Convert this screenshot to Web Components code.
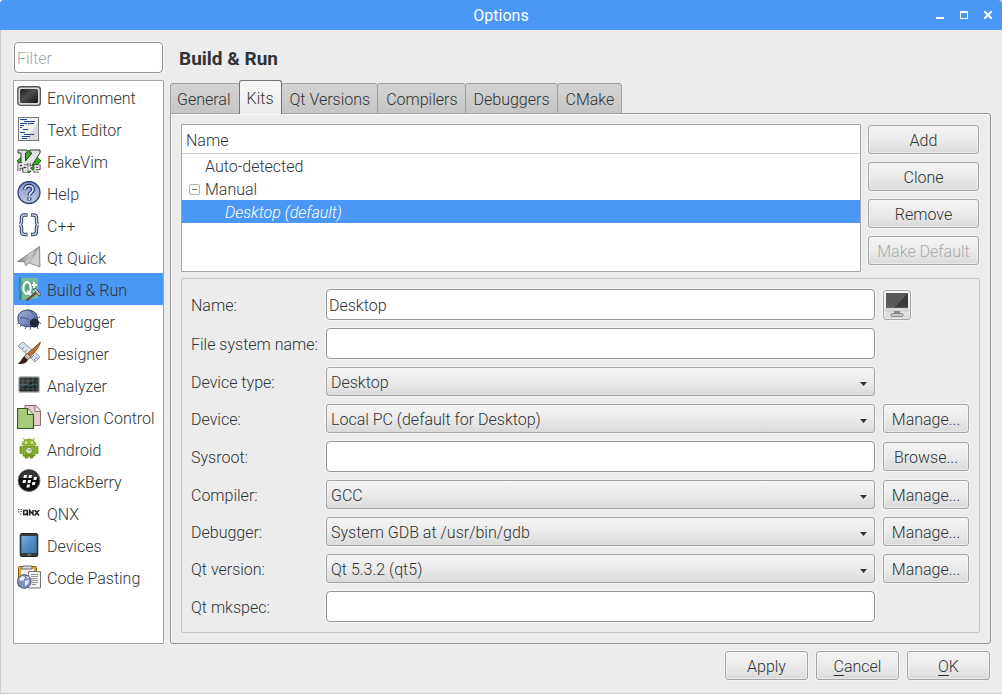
<!DOCTYPE html>
<html lang="en">
<head>
<meta charset="utf-8">
<title>Options</title>
<style>
html { --accent: #4b97f5; --face: #ececec; --ink: #2f3436; --edge: #a3a5a6; --edge-dark: #929495; }
body { margin: 0; background: #ececec; color: #2f3436; font: 300 16px/20px Roboto, sans-serif; }
</style>
</head>
<body>
<options-window></options-window>

<script>
const define = (name, html, setup) => {
  const template = document.createElement('template');
  template.innerHTML = html;
  customElements.define(name, class extends HTMLElement {
    connectedCallback() {
      if (this.shadowRoot) return;
      const content = template.content.cloneNode(true);
      if (setup) setup(this, content);
      this.attachShadow({ mode: 'open' }).append(content);
    }
  });
};

const ICONS = {
  environment: `<defs><linearGradient id="a" x1="0" y1="0" x2="1" y2="1"><stop offset="0" stop-color="#1d1d1d"/><stop offset=".45" stop-color="#4c4e4e"/><stop offset="1" stop-color="#111"/></linearGradient></defs><rect x=".8" y="1.8" width="22.6" height="18.6" rx="3" fill="#d9d9d9" stroke="#55575a" stroke-width="1.4"/><rect x="3" y="4" width="18" height="14" rx="1.5" fill="url(#a)"/>`,
  text: `<rect x="1.500" y=".5" width="20" height="23" fill="#f1f1f2" stroke="#77797b"/><path d="M21 5V23H9z" fill="#dadbdc"/><path d="M3 2.500h7M7 4.500h11M3 6.500h7M3 8.500h4M11 6.500h6M3 10.500h2M6 12.500h5M3 15.500h5M7 17.500h10M5 19.500h8M5 21.500h5" stroke="#20458c" stroke-width="1.200"/>`,
  vim: `<path d="M12 1l12 11-12 12L0 12z" fill="#36b21e" stroke="#176b0c"/><path d="M1 1h9v3H8.500v8L15 4h-2V1h10v3L12 21H6L4 18V4H1z" fill="#e2e4e3" stroke="#333" stroke-width="1"/><path d="M2 22v-7h3M2 18h3M7 17h3v5H7v-2h3M12 14v8M15 17l-3 2 3 3M18 19.500h4V17h-4v5h4" fill="none" stroke="#333" stroke-width="3"/><path d="M2 22v-7h3M2 18h3M7 17h3v5H7v-2h3M12 14v8M15 17l-3 2 3 3M18 19.500h4V17h-4v5h4" fill="none" stroke="#fff" stroke-width="1.300"/>`,
  help: `<defs><linearGradient id="b" x2="0" y2="1"><stop stop-color="#7d91c2"/><stop offset="1" stop-color="#c4cce3"/></linearGradient></defs><circle cx="12" cy="11.500" r="11" fill="url(#b)" stroke="#354777" stroke-width="1.300"/><path d="M8 8.500C8 3.500 16 3.500 16 8.500c0 3-3.700 3-3.700 6M12.300 16.500v3" fill="none" stroke="#273969" stroke-width="4"/><path d="M8 8.500C8 3.500 16 3.500 16 8.500c0 3-3.700 3-3.700 6M12.300 16.800v2.200" fill="none" stroke="#dce2f2" stroke-width="1.700"/>`,
  cpp: `<path d="M10.500 2H7.500C5.500 2 4.500 3 4.500 5v3c0 2-1 3.500-2.500 3.500 1.500 0 2.500 1.500 2.500 3.500v3c0 2 1 3.500 3 3.500h3M14 2h2.500c2 0 3 1 3 3v3c0 2 1 3.500 2.500 3.500-1.500 0-2.500 1.500-2.500 3.500v3c0 2-1 3.500-3 3.500H14" fill="none" stroke="#303f5d" stroke-width="3.400"/><path d="M9.800 2H7.500C5.500 2 4.500 3 4.500 5v3c0 2-1 3.500-2.500 3.500 1.500 0 2.500 1.500 2.500 3.500v3c0 2 1 3.500 3 3.500h2.300M14.700 2h1.800c2 0 3 1 3 3v3c0 2 1 3.500 2.500 3.500-1.500 0-2.500 1.500-2.500 3.500v3c0 2-1 3.500-3 3.500h-1.800" fill="none" stroke="#c8d2e5" stroke-width="1.400"/>`,
  quick: `<defs><linearGradient id="c" x2="1"><stop stop-color="#777"/><stop offset=".6" stop-color="#d5d5d5"/><stop offset="1" stop-color="#8c8c8c"/></linearGradient></defs><path d="M22.500 1.500L.5 16.500l7 .5 1 3.500 4-2.500 10.500 4z" fill="url(#c)" stroke="#838383" stroke-width=".8"/><path d="M22 2L8 17l.8 3.200L22 2l-9 16 9.500 3.500z" fill="#d0d0d0" stroke="#969696" stroke-width=".6"/>`,
  build: `<path d="M2 1l3-1v22l-3 1z" fill="#3c8d6b"/><path d="M4 1h17v20L5 23z" fill="#74bc94"/><circle cx="10.500" cy="11" r="7.600" fill="#5aa980"/><ellipse cx="10" cy="11" rx="3.700" ry="5.800" fill="none" stroke="#fff" stroke-width="2.200"/><path d="M10 14l4 4M17 5v9l2 1M15 8h5" fill="none" stroke="#fff" stroke-width="1.800"/><path d="M20 15L9.500 23.500" stroke="#7a4434" stroke-width="2.200"/><path d="M16 12l3-.5 5 6-2 1.500z" fill="#c5c6c7" stroke="#434648" stroke-width=".9"/>`,
  debugger: `<defs><linearGradient id="d" x2="1" y2="1"><stop stop-color="#a2b3db"/><stop offset="1" stop-color="#526a9e"/></linearGradient></defs><path d="M3 13l-3 2M5 15l-2 3M10 17l-2 3M14 17l-1 4M20 17l1 3M21 12l3 3M21 9l2-1" stroke="#5c626f" stroke-width="1"/><path d="M1 10C0 4 6 1 11 1c7 0 11 6 9 12-3 6-8 5-13 4-4-1-6-3-6-7z" fill="url(#d)" stroke="#2b3c65"/><path d="M3 9c6-1 10 1 13 7M11 1c5 2 7 6 8 10" fill="none" stroke="#354873" stroke-width=".8"/><circle cx="17.500" cy="14" r="4.600" fill="#202838"/>`,
  designer: `<path d="M1 5l5-4 17 15-5 5z" fill="#dce0e7" stroke="#8a93a5"/><path d="M5 8l2-2M8 11l2-2M14 17l3-3M17 19l3-3" stroke="#7c879d"/><path d="M23.500 1L10 13l3 3C17 12 22 7 23.500 1z" fill="#be7331" stroke="#774114" stroke-width=".8"/><path d="M10 12l4 4-4 3-3-3z" fill="#bbb" stroke="#68594c"/><path d="M7 15.500l4 3.500c-2 4-6 4-10.500 4C4 21 4 18 7 15.500z" fill="#332017"/>`,
  analyzer: `<rect x="1.800" y="3.800" width="20.500" height="15.500" rx="1.500" fill="#222" stroke="#bcbcbc" stroke-width="1.400"/><path d="M3 8h18M3 12h18M3 16h18M6 5v13M11 5v13M16 5v13M20 5v13" stroke="#46585b" stroke-width=".8"/><path d="M3 12l2-1 2 1 3-1 2 2 3-1 2-1 4 1" fill="none" stroke="#34656f"/><path d="M3 5h17L3 16z" fill="#fff" opacity=".1"/>`,
  version: `<path d="M8 .5h11l4.500 5v15H8z" fill="#e5cdcd" stroke="#82706e"/><path d="M18 1v5.500h5.500" fill="#f5e7e7" stroke="#82706e"/><path d="M.5 3.500h10l6 6v14H.5z" fill="#a8ca7c" stroke="#38582c" stroke-width="1.200"/><path d="M10.500 3.500v6h6" fill="#dfedcb" stroke="#38582c" stroke-width="1.200"/>`,
  android: `<path d="M5 8a7 6 0 0 1 14 0z" fill="#95be35" stroke="#6e941e" stroke-width=".7"/><path d="M8 3L6 1M16 3l2-2" stroke="#89ae38"/><circle cx="9" cy="5.500" r=".9" fill="#fff"/><circle cx="15" cy="5.500" r=".9" fill="#fff"/><path d="M6 9h12v10H6zM3 9.500h2v7H3zM19 9.500h2v7h-2zM8 18h3v3H8zM13 18h3v3h-3z" fill="#85ae27" stroke="#658c18" stroke-width=".8"/><circle cx="12" cy="13.500" r="3.400" fill="#dfe7d4" stroke="#71922b"/><path d="M12 13.500l-2-2M12 13.500l2-1" stroke="#738b46"/>`,
  blackberry: `<circle cx="12" cy="11.500" r="11" fill="#111" stroke="#77797a" stroke-width="1"/><path d="M2 9c4-10 16-10 20 0z" fill="#fff" opacity=".16"/><path d="M7 6h3l-.6 3h-3zM12 6h3l-.6 3h-3zM6 11h3l-.6 3h-3zM11 11h3l-.6 3h-3zM17 8h3l-.6 3h-3zM10 15.500h3l-.6 3h-3zM15.500 13h3l-.6 3h-3z" fill="#fff"/>`,
  qnx: `<path d="M1 8.500h1.500M1 11h1.500M3.500 8.500h1.500M3.500 10.500h1.500M3 13h1.500" stroke="#555" stroke-width="1.200"/><path d="M6.700 9.500h3.800v4H6.700zM9 12l2 2.500M12.700 14.500v-5l3.300 4v-4.500M17.500 9l4.500 5.500M22 9l-4.500 5.500" fill="none" stroke="#242424" stroke-width="1.500"/>`,
  devices: `<defs><linearGradient id="e" x2="1" y2="1"><stop stop-color="#79b2e3"/><stop offset=".5" stop-color="#4f8dc2"/><stop offset="1" stop-color="#3c74a8"/></linearGradient></defs><rect x="3.200" y=".5" width="17.600" height="23" rx="1.500" fill="#373b3e" stroke="#22272b"/><rect x="4.500" y="3" width="15" height="17" fill="url(#e)"/><path d="M10 21.800h4" stroke="#979797"/>`,
  pasting: `<rect x="1.500" y="1.500" width="18" height="20" rx="1" fill="#d9ac2c" stroke="#86610d"/><rect x="4" y="4" width="13" height="14" fill="#f0efe8"/><path d="M6 1h9v3H4z" fill="#ddd" stroke="#666"/><path d="M11.500 6.500h12v16.500h-12z" fill="#f3f3f3" stroke="#777"/><path d="M14 9.500h7M14 11.500h7M14 13.500h6M15 15.500h6M15 17.500h6M15 19.500h4" stroke="#8a8c8e" stroke-width=".9"/><circle cx="7.300" cy="16.500" r="6.800" fill="#8293ba" stroke="#435279"/><path d="M2 14l3-3 3 1-1 3-3 1zM8 16l4-1-1 4-3 2zM9 11l3 1-1 2z" fill="#e9edf5"/>`,
  monitor: `<rect x="1" y="0" width="22" height="15" fill="#3a3a39"/><path d="M1 0h22L9 15H1z" fill="#595958"/><path d="M1 15h22v3H1z" fill="#dedede" stroke="#aaa" stroke-width=".5"/><path d="M9 18h6v3H9z" fill="#8b8b8b"/><rect x="6" y="20.500" width="12" height="3" rx="1" fill="#c8c8c8" stroke="#777" stroke-width=".8"/>`
};

define('app-icon', `
<style>:host { display: block; flex: none; width: 24px; height: 24px; } svg { display: block; }</style>
<svg viewBox="0 0 24 24" width="24" height="24" aria-hidden="true"></svg>`,
(host, root) => { root.querySelector('svg').innerHTML = ICONS[host.getAttribute('name')]; });

define('push-button', `
<style>
:host { display: block; margin: 0 1px; }
button { display: flex; align-items: center; justify-content: center; box-sizing: border-box; width: 100%; height: 29px;
  margin: 0; padding: 2px 0 0; border: 1px solid var(--edge); border-radius: 3px;
  background: linear-gradient(#f5f5f5, #ebebeb 50%, #dadada); box-shadow: 0 0 0 1px #f3f3f3, inset 0 0 0 1px #f7f7f780;
  color: var(--ink); font: inherit; white-space: nowrap; }
button:disabled { color: #a9abac; }
:host([icon]) button { width: 28px; height: 30px; padding: 0; }
</style>
<button type="button"><span><slot></slot></span></button>`,
(host, root) => {
  const button = root.querySelector('button');
  button.disabled = host.hasAttribute('disabled');
  if (host.hasAttribute('icon')) button.setAttribute('aria-label', host.getAttribute('icon'));
});

define('title-bar', `
<style>
:host { display: grid; grid-template-columns: 72px 1fr 72px; align-items: center; height: 30px; background: var(--accent);
  border-radius: 4px 4px 0 0; color: #fff; }
h1 { grid-column: 2; margin: 0; padding-top: 2px; text-align: center; font: inherit; font-weight: 400; }
div { display: flex; justify-content: flex-end; padding-right: 2px; }
button { width: 24px; height: 24px; margin: 0; padding: 8px; border: 0; background: none; }
svg { display: block; fill: none; stroke: #fff; stroke-width: 2; }
</style>
<h1><slot></slot></h1>
<div>
  <button type="button" aria-label="Minimize"><svg width="8" height="8"><path d="M0 7h8"/></svg></button>
  <button type="button" aria-label="Maximize"><svg width="8" height="8"><path d="M0 1h8M.5 1v7M7.500 1v7M0 7.500h8" stroke-width="1"/><path d="M0 1h8"/></svg></button>
  <button type="button" aria-label="Close"><svg width="8" height="8"><path d="M0 0l8 8M8 0L0 8"/></svg></button>
</div>`);

define('filter-box', `
<style>
:host { display: block; margin: 0 1px; }
input { display: block; box-sizing: border-box; width: 100%; height: 31px; margin: 0; padding: 2px 2px 0; border: 1px solid var(--edge-dark);
  border-radius: 4px; background: #fff; box-shadow: 0 0 0 1px #f5f5f5; color: var(--ink); font: inherit; }
input::placeholder { color: #a4a6a7; opacity: 1; }
</style>
<input type="text" placeholder="Filter" aria-label="Filter">`);

define('nav-item', `
<style>
:host { display: block; }
button { display: flex; align-items: center; gap: 6px; width: 100%; height: 32px; margin: 0; padding: 0 3px; border: 0;
  background: none; color: var(--ink); font: inherit; white-space: nowrap; }
span { padding-top: 4px; }
:host([selected]) button { background: var(--accent); }
</style>
<button type="button"><app-icon></app-icon><span><slot></slot></span></button>`,
(host, root) => {
  root.querySelector('app-icon').setAttribute('name', host.getAttribute('icon'));
  if (host.hasAttribute('selected')) root.querySelector('button').setAttribute('aria-current', 'page');
});

define('nav-list', `
<style>:host { display: block; border: 1px solid var(--edge); border-radius: 1px; background: #fff; }</style>
<nav aria-label="Categories"><slot></slot></nav>`);

define('tab-item', `
<style>
:host { display: block; margin-left: -1px; }
button { display: block; box-sizing: border-box; height: 31px; margin: 0; padding: 2px 7px 0 8px; border: 1px solid #a1a1a1;
  border-radius: 3px 3px 0 0; background: linear-gradient(#d4d4d4, #c5c5c5); color: var(--ink); font: inherit; white-space: nowrap; }
:host([first]) { margin-left: 0; }
:host([first]) button { padding: 2px 8px 0 6px; }
:host([selected]) { position: relative; z-index: 1; }
:host([selected]) button { height: 34px; padding: 2px 7px 0; border-color: #747677; border-bottom: 0; background: linear-gradient(#f7f7f7, #ececec); }
</style>
<button type="button" role="tab"><slot></slot></button>`,
(host, root) => root.querySelector('button').setAttribute('aria-selected', host.hasAttribute('selected')));

define('tab-strip', `
<style>:host { display: flex; align-items: flex-end; height: 34px; margin-bottom: -1px; position: relative; }</style>
<slot></slot>`);

define('kit-tree', `
<style>
:host { display: block; box-sizing: border-box; height: 148px; border: 1px solid var(--edge); border-radius: 1px; background: #fff; }
table { width: 100%; border-collapse: collapse; }
th, td { padding: 2px 0 0 23px; height: 21px; text-align: left; font-weight: 300; white-space: nowrap; }
th { height: 24px; padding: 4px 0 0 4px; border-bottom: 1px solid #d0d0d0; }
.group { display: flex; align-items: center; gap: 5px; padding-left: 7px; }
svg { display: block; }
.selected { background: var(--accent); color: #fff; font-style: italic; }
.selected td { padding-left: 43px; }
</style>
<table>
  <thead><tr><th scope="col">Name</th></tr></thead>
  <tbody>
    <tr><td>Auto-detected</td></tr>
    <tr><td class="group"><svg width="11" height="11" aria-hidden="true"><rect x=".5" y=".5" width="10" height="10" rx="1.500" fill="#fff" stroke="#b0b0b0"/><path d="M3 5.500h5" stroke="#777"/></svg>Manual</td></tr>
    <tr class="selected" aria-selected="true"><td>Desktop (default)</td></tr>
  </tbody>
</table>`);

define('form-row', `
<style>
:host { display: grid; grid-template-columns: 135px 1fr 95px; align-items: center; }
label { padding-top: 2px; white-space: nowrap; }
.field { display: grid; align-items: center; }
input, select { grid-area: 1 / 1; box-sizing: border-box; width: 100%; min-width: 0; margin: 0; color: var(--ink); font: inherit; }
input { height: 31px; padding: 2px 2px 0; border: 1px solid var(--edge-dark); border-radius: 4px; background: #fff; box-shadow: 0 0 0 1px #f5f5f5; }
select { appearance: none; height: 29px; padding: 2px 20px 0 4px; border: 1px solid var(--edge); border-radius: 3px;
  background: linear-gradient(#f5f5f5, #ebebeb 50%, #dadada); box-shadow: 0 0 0 1px #f3f3f3; }
svg { grid-area: 1 / 1; justify-self: end; margin: 4px 8px 0 0; pointer-events: none; }
slot { display: block; padding-left: 7px; }
</style>
<label for="field"></label>
<div class="field"></div>
<slot></slot>`,
(host, root) => {
  root.querySelector('label').textContent = host.getAttribute('label');
  const value = host.getAttribute('value') || '';
  const field = root.querySelector('.field');
  if (host.hasAttribute('choice')) {
    field.innerHTML = '<select id="field"><option></option></select><svg width="7" height="4" aria-hidden="true"><path d="M0 0h7L3.500 4z" fill="#2f3436"/></svg>';
    field.querySelector('option').textContent = value;
  } else {
    field.innerHTML = '<input id="field" type="text">';
    field.querySelector('input').setAttribute('value', value);
  }
});

define('kit-form', `
<style>:host { display: flex; flex-direction: column; gap: 8px; flex: 1; padding: 10px 9px; border: 1px solid #c6c6c6; border-radius: 2px; }</style>
<slot></slot>`);

define('options-window', `
<style>
:host { display: flex; flex-direction: column; box-sizing: border-box; min-height: 100vh; border-bottom: 1px solid #c5c5c5; background: var(--face); }
.body { display: grid; grid-template-columns: 151px minmax(0, 1fr); gap: 6px; flex: 1; padding: 12px 11px 7px 12px; border-left: 1px solid #d0d0d0; }
aside { display: flex; flex-direction: column; gap: 7px; }
nav-list { flex: 1; }
main { display: flex; flex-direction: column; }
h2 { height: 38px; margin: 0; padding-left: 9px; font-size: 19px; line-height: 34px; font-weight: 700; }
.page { display: flex; flex-direction: column; gap: 6px; flex: 1; padding: 10px; border: 1px solid #929495; border-radius: 0 3px 3px 3px; box-shadow: inset 1px 1px #fbfbfb; }
.kits { display: grid; grid-template-columns: 1fr 113px; gap: 6px; }
.actions { display: flex; flex-direction: column; gap: 8px; padding-top: 1px; }
footer { display: flex; justify-content: flex-end; gap: 6px; padding: 0 11px 13px 12px; border-left: 1px solid #d0d0d0; }
footer push-button { width: 83px; }
u { text-underline-offset: 3px; }
</style>
<title-bar>Options</title-bar>
<div class="body">
  <aside>
    <filter-box></filter-box>
    <nav-list>
      <nav-item icon="environment">Environment</nav-item>
      <nav-item icon="text">Text Editor</nav-item>
      <nav-item icon="vim">FakeVim</nav-item>
      <nav-item icon="help">Help</nav-item>
      <nav-item icon="cpp">C++</nav-item>
      <nav-item icon="quick">Qt Quick</nav-item>
      <nav-item icon="build" selected>Build &amp; Run</nav-item>
      <nav-item icon="debugger">Debugger</nav-item>
      <nav-item icon="designer">Designer</nav-item>
      <nav-item icon="analyzer">Analyzer</nav-item>
      <nav-item icon="version">Version Control</nav-item>
      <nav-item icon="android">Android</nav-item>
      <nav-item icon="blackberry">BlackBerry</nav-item>
      <nav-item icon="qnx">QNX</nav-item>
      <nav-item icon="devices">Devices</nav-item>
      <nav-item icon="pasting">Code Pasting</nav-item>
    </nav-list>
  </aside>
  <main>
    <h2>Build &amp; Run</h2>
    <tab-strip role="tablist">
      <tab-item first>General</tab-item>
      <tab-item selected>Kits</tab-item>
      <tab-item>Qt Versions</tab-item>
      <tab-item>Compilers</tab-item>
      <tab-item>Debuggers</tab-item>
      <tab-item>CMake</tab-item>
    </tab-strip>
    <section class="page">
      <div class="kits">
        <kit-tree></kit-tree>
        <div class="actions">
          <push-button>Add</push-button>
          <push-button>Clone</push-button>
          <push-button>Remove</push-button>
          <push-button disabled>Make Default</push-button>
        </div>
      </div>
      <kit-form>
        <form-row label="Name:" value="Desktop"><push-button icon="Kit icon"><app-icon name="monitor"></app-icon></push-button></form-row>
        <form-row label="File system name:"></form-row>
        <form-row choice label="Device type:" value="Desktop"></form-row>
        <form-row choice label="Device:" value="Local PC (default for Desktop)"><push-button>Manage...</push-button></form-row>
        <form-row label="Sysroot:"><push-button>Browse...</push-button></form-row>
        <form-row choice label="Compiler:" value="GCC"><push-button>Manage...</push-button></form-row>
        <form-row choice label="Debugger:" value="System GDB at /usr/bin/gdb"><push-button>Manage...</push-button></form-row>
        <form-row choice label="Qt version:" value="Qt 5.3.2 (qt5)"><push-button>Manage...</push-button></form-row>
        <form-row label="Qt mkspec:"></form-row>
      </kit-form>
    </section>
  </main>
</div>
<footer>
  <push-button>Apply</push-button>
  <push-button><u>C</u>ancel</push-button>
  <push-button><u>O</u>K</push-button>
</footer>`);
</script>
</body>
</html>
